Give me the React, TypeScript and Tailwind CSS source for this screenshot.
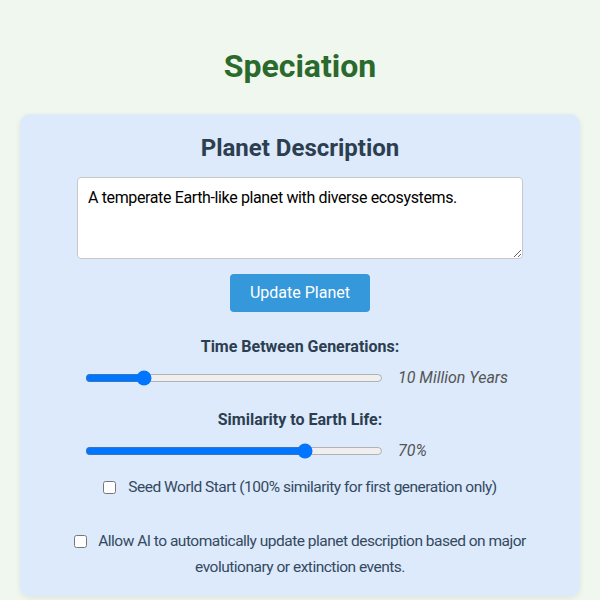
import React from "react";

export default function App() {
  return (
    <div className="min-h-screen bg-[#f0f7ee] font-['Roboto',sans-serif] pb-[10px]">
      <h1 className="pt-[47px] text-center text-[32px] leading-[38px] font-bold text-[#2a6a2c]">
        Speciation
      </h1>
      <div className="mx-[20px] mt-[29px] rounded-[10px] bg-[#dceafc] shadow-[0_2px_6px_rgba(0,0,0,0.08)] pt-[20px] pb-[16px]">
        <h2 className="text-center text-[24px] leading-[29px] font-bold text-[#2c3e50]">
          Planet Description
        </h2>
        <div className="mt-[14px] flex justify-center">
          <textarea
            className="w-[446px] h-[82px] rounded-[4px] border border-[#c8c8c8] bg-white px-[10px] pt-[10px] pb-[8px] text-[16px] leading-[20px] tracking-[-0.37px] text-black font-['Roboto',sans-serif] outline-none"
            defaultValue="A temperate Earth-like planet with diverse ecosystems."
          />
        </div>
        <div className="mt-[15px] flex justify-center">
          <button className="h-[38px] w-[140px] rounded-[4px] bg-[#3498db] text-[16px] text-white">
            Update Planet
          </button>
        </div>
        <div className="mt-[25px] text-center text-[16px] leading-[20px] font-bold text-[#2c3e50]">
          Time Between Generations:
        </div>
        <div className="mt-[9px] flex items-center gap-[15px] pl-[65px]">
          <input type="range" min={0} max={100} defaultValue={18} className="w-[298px] m-0" />
          <span className="text-[16px] italic text-[#555555]">10 Million Years</span>
        </div>
        <div className="mt-[20px] text-center text-[16px] leading-[20px] font-bold text-[#2c3e50]">
          Similarity to Earth Life:
        </div>
        <div className="mt-[9px] flex items-center gap-[15px] pl-[65px]">
          <input type="range" min={0} max={100} defaultValue={75} className="w-[298px] m-0" />
          <span className="text-[16px] italic text-[#555555]">70%</span>
        </div>
        <div className="mt-[13px] flex items-center justify-center gap-[12px] text-[15.5px] tracking-[-0.5px] text-[#34495e]">
          <input type="checkbox" className="m-0 h-[13px] w-[13px]" />
          <span>Seed World Start (100% similarity for first generation only)</span>
        </div>
        <div className="mt-[29px] mx-auto w-[462px] text-center text-[15.5px] leading-[26px] tracking-[-0.5px] text-[#34495e]">
          <label>
            <input type="checkbox" className="m-0 mr-[11px] h-[13px] w-[13px] align-[-2px]" />
            Allow AI to automatically update planet description based on major evolutionary or extinction events.
          </label>
        </div>
      </div>
    </div>
  );
}
